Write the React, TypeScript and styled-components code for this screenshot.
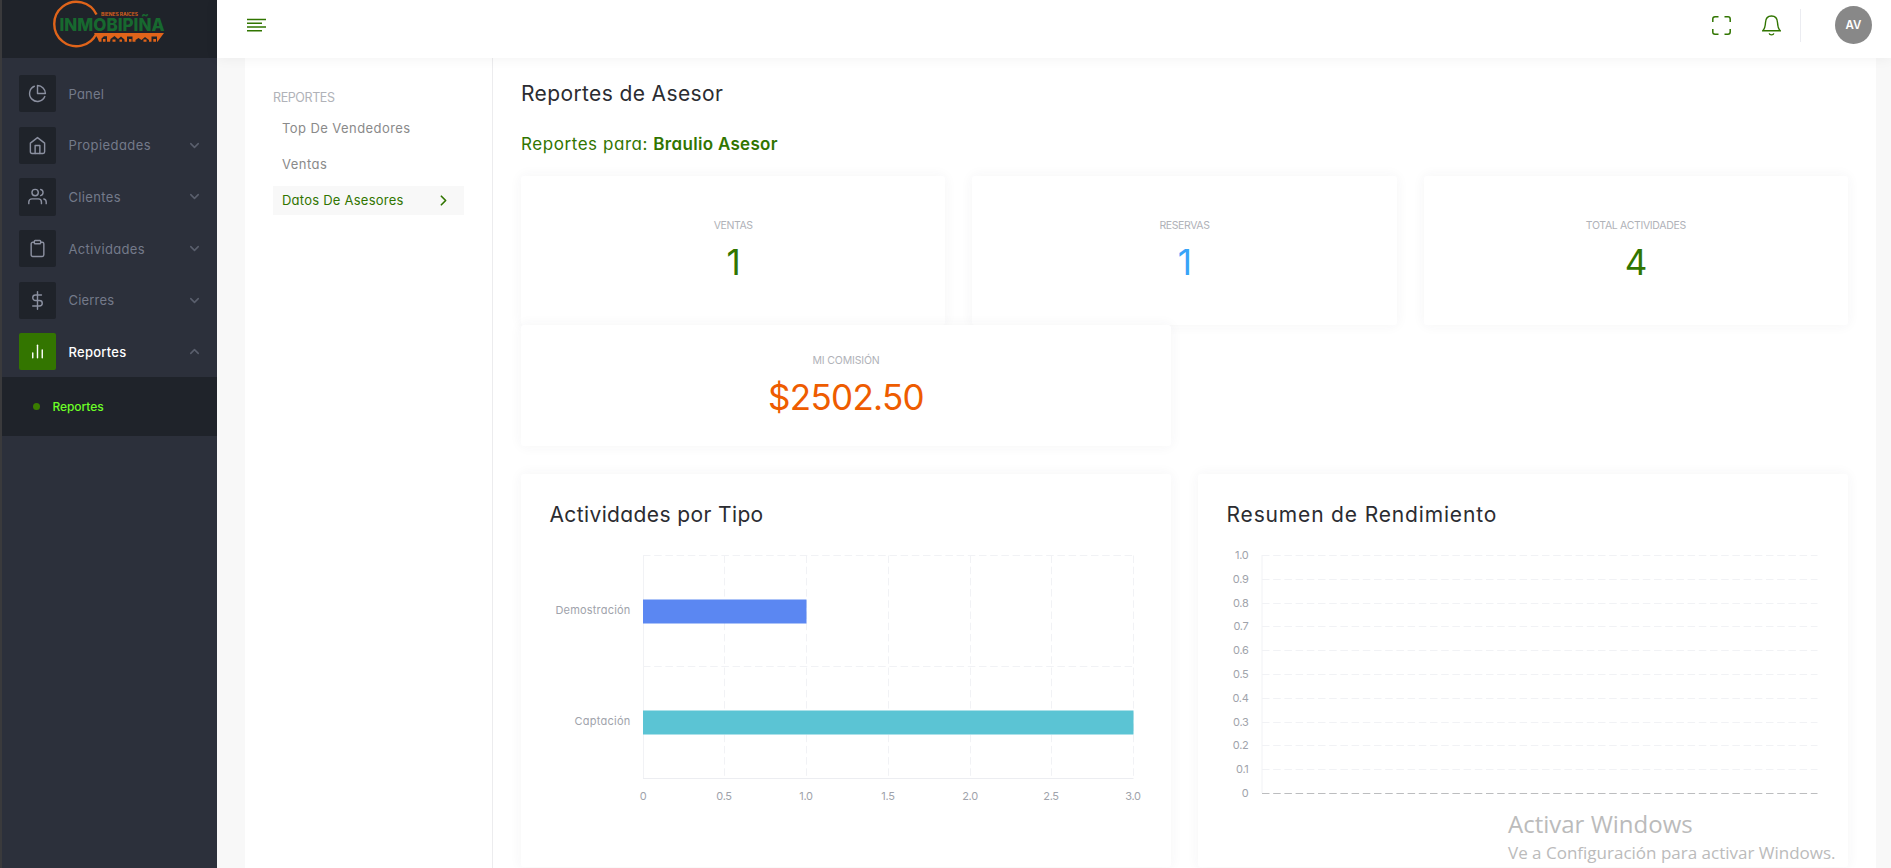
import React from 'react';
import styled, { createGlobalStyle } from 'styled-components';
import {
  FiBarChart2,
  FiChevronDown,
  FiChevronRight,
  FiChevronUp,
  FiClipboard,
  FiDollarSign,
  FiHome,
  FiPieChart,
  FiUsers,
} from 'react-icons/fi';
import type { IconType } from 'react-icons';

const color = {
  green: '#317500',
  lime: '#6cff26',
  blue: '#38a4f8',
  orange: '#ee5c00',
  ink: '#2b2c31',
  muted: '#b0b2b8',
  sidebar: '#2c303b',
  sidebarDark: '#1f232a',
  sidebarText: '#747a8a',
};

const GlobalStyle = createGlobalStyle`
  *, *::before, *::after { box-sizing: border-box; }
  body {
    margin: 0;
    background: #f8f8f8;
    font-family: Inter, "Open Sans", sans-serif;
    font-feature-settings: "cv11";
    overflow: hidden;
  }
  h1, h2, h3, p { margin: 0; font-weight: 400; }
`;

const Shell = styled.div`
  display: flex;
  width: 100%;
  height: 868px;
  overflow: hidden;
`;

/* Sidebar */

const Sidebar = styled.aside`
  width: 217px;
  flex: none;
  background: ${color.sidebar};
  border-left: 2px solid #3a3a3c;
`;

const Brand = styled.div`
  height: 58px;
  padding-left: 50px;
  background: ${color.sidebarDark};
  svg { display: block; }
`;

const Nav = styled.nav`
  display: flex;
  flex-direction: column;
  gap: 14.4px;
  padding: 17.2px 17px 6.7px;
`;

const NavRow = styled.div<{ $active?: boolean }>`
  display: flex;
  align-items: center;
  height: 37.2px;
  color: ${p => (p.$active ? '#fff' : color.sidebarText)};
`;

const NavIcon = styled.span<{ $active?: boolean }>`
  display: grid;
  place-items: center;
  width: 37px;
  height: 37.2px;
  border-radius: 2px;
  color: ${p => (p.$active ? '#fff' : '#8b90a0')};
  background: ${p => (p.$active ? '#337500' : color.sidebarDark)};
  svg { stroke-width: 1.8; }
`;

const NavLabel = styled.span<{ $track: number; $active?: boolean }>`
  flex: 1;
  margin-left: 12.5px;
  font-size: 13px;
  font-weight: ${p => (p.$active ? 500 : 400)};
  letter-spacing: ${p => p.$track}px;
`;

const NavArrow = styled.span`
  display: grid;
  margin-right: -1.5px;
  color: #5a5f6d;
  svg { stroke-width: 2.4; }
`;

const SubMenu = styled.div`
  display: flex;
  align-items: center;
  height: 59px;
  padding-left: 31px;
  background: ${color.sidebarDark};
  color: ${color.lime};
  font-size: 12px;
  font-weight: 500;
  letter-spacing: -0.08px;
`;

const Dot = styled.i`
  width: 7px;
  height: 7px;
  margin-right: 12.5px;
  border-radius: 50%;
  background: #3a7d00;
`;

/* Top bar */

const Main = styled.div`
  display: flex;
  flex: 1;
  min-width: 0;
  flex-direction: column;
`;

const TopBar = styled.header`
  position: relative;
  z-index: 1;
  display: flex;
  flex: none;
  justify-content: space-between;
  height: 58px;
  padding: 0 19px 0 30px;
  background: #fff;
  box-shadow: 0 0 13px rgba(30, 30, 40, 0.06);
  color: ${color.green};
`;

const MenuIcon = styled.svg`
  margin-top: 17px;
`;

const Tools = styled.div`
  display: flex;
  height: 50px;
  align-items: center;
`;

const BellIcon = styled.svg`
  margin-left: 31px;
`;

const Divider = styled.span`
  width: 1px;
  height: 33px;
  margin: 0 34px 0 19px;
  background: #ebecf1;
`;

const Avatar = styled.span`
  display: grid;
  place-items: center;
  width: 37px;
  height: 38px;
  padding-bottom: 1px;
  border-radius: 50%;
  background: #888;
  color: #fff;
  font-size: 11.5px;
  font-weight: 600;
`;

/* Page */

const Page = styled.main`
  display: flex;
  flex: 1;
  min-height: 0;
  margin: 0 15px 0 28px;
  background: #fff;
`;

const SideList = styled.section`
  width: 248px;
  flex: none;
  padding: 30px 28px 0;
  border-right: 1px solid #ececee;
`;

const SideTitle = styled.h3`
  height: 20px;
  line-height: 20px;
  margin-bottom: 5.5px;
  color: ${color.muted};
  font-size: 12.5px;
  letter-spacing: -0.4px;
`;

const SideItem = styled.div<{ $active?: boolean; $track: number }>`
  display: flex;
  align-items: center;
  justify-content: space-between;
  height: 29px;
  margin-bottom: 7.2px;
  padding: 0 12px 0 9px;
  background: ${p => (p.$active ? '#f8f8f8' : 'none')};
  color: ${p => (p.$active ? color.green : '#8a8a8a')};
  font-size: 13px;
  letter-spacing: ${p => p.$track}px;
`;

const Body = styled.section`
  flex: 1;
  min-width: 0;
  padding: 20.5px 28px 0;
`;

const Title = styled.h1`
  height: 30px;
  line-height: 30px;
  color: ${color.ink};
  font-size: 21px;
  letter-spacing: 0.38px;
`;

const Advisor = styled.h2`
  height: 28px;
  margin: 21px 0 18.5px;
  line-height: 28px;
  color: ${color.green};
  font-size: 17px;
  letter-spacing: 0.56px;
  strong { font-weight: 600; letter-spacing: 0.3px; }
`;

const Card = styled.div`
  position: relative;
  border-radius: 3px;
  background: #fff;
  box-shadow: 0 0 13px rgba(60, 60, 70, 0.055);
`;

const StatRow = styled.div`
  display: grid;
  grid-template-columns: repeat(3, 1fr);
  gap: 27px;
`;

const HalfRow = styled.div`
  display: grid;
  grid-template-columns: repeat(2, 1fr);
  gap: 27px;
  margin-bottom: 28px;
`;

const Stat = styled(Card)<{ $tall?: boolean }>`
  height: ${p => (p.$tall ? 149 : 121)}px;
  padding-top: ${p => (p.$tall ? 39.5 : 25.5)}px;
  text-align: center;
`;

const StatLabel = styled.p<{ $track: number }>`
  height: 20px;
  line-height: 20px;
  color: ${color.muted};
  font-size: 10.5px;
  letter-spacing: ${p => p.$track}px;
`;

const StatValue = styled.p<{ $color: string }>`
  height: 50px;
  margin-top: 1px;
  line-height: 50px;
  color: ${p => p.$color};
  font-size: 35px;
  letter-spacing: -0.7px;
`;

const ChartCard = styled(Card)`
  height: 393px;
  padding-top: 26px;
`;

const ChartTitle = styled.h3<{ $track: number }>`
  height: 30px;
  margin: 0 0 10px 28.5px;
  line-height: 30px;
  color: ${color.ink};
  font-size: 21px;
  letter-spacing: ${p => p.$track}px;
`;

const Plot = styled.svg`
  display: block;
  text { font-size: 11px; fill: #a0a3ab; }
`;

const Watermark = styled.div`
  position: absolute;
  z-index: 2;
  left: 1508px;
  top: 806px;
  color: #bbb;
  font-family: "Open Sans", sans-serif;
  white-space: nowrap;
  p { height: 35px; line-height: 35px; font-size: 24px; }
  small { display: block; height: 24px; line-height: 24px; font-size: 17px; }
`;

/* Drawings */

function Logo() {
  return (
    <svg width="116" height="50" viewBox="52 0 116 50">
      <path d="M96.5 14.5A22.2 22.2 0 1 0 96.5 33.5" fill="none" stroke="#e0641a" strokeWidth="2.400" />
      <path d="M94 33H164L157.500 41.700H99L97.500 38Z" fill="#e0641a" />
      <g fill={color.sidebarDark}>
        <path d="M101.500 42V38.500L104 36.300H107V42ZM110 42L110.500 39L114.500 36L118 39L121 36.500L124.500 39.500V42ZM127 42V36.500H132.500V42ZM135.500 42V40L138.500 38L141.500 40L145 37L149 40V42ZM151.500 42V36.500H157V42Z" />
      </g>
      <path
        d="M103 39H105.500V41.700H103ZM112.500 39.500H115.500V41.700H112.500ZM119.500 39.500H122V41.700H119.500ZM129 39H131.500V41.700H129ZM143.500 39.500H146.500V41.700H143.500ZM153.300 39H156V41.700H153.300Z"
        fill="#e0641a"
      />
      <text x="101" y="16" fontSize="4.300" fontWeight="700" fill="#d65f1c" textLength="37" lengthAdjust="spacingAndGlyphs">
        BIENES RAICES
      </text>
      <text x="59.500" y="31" fontSize="17.500" fontWeight="800" fill="#17692f" textLength="105" lengthAdjust="spacingAndGlyphs">
        INMOBIPIÑA
      </text>
    </svg>
  );
}

const DASH = '7.5 3.7';
const GRID = '#f1f2f5';

function ActivityChart() {
  const left = 122;
  const unit = 163.5;
  const top = 15.5;
  const bottom = 238.5;
  const ticks = [0, 0.5, 1, 1.5, 2, 2.5, 3];
  const bars = [
    { name: 'Demostración', value: 1, y: 59.5, fill: '#5b87f2', track: 0.19 },
    { name: 'Captación', value: 3, y: 170.5, fill: '#5bc4d4', track: 0.25 },
  ];
  return (
    <Plot width="650" height="320">
      {[top, 126.5].map(y => (
        <line key={y} x1={left} x2={left + 3 * unit} y1={y} y2={y} stroke={GRID} strokeDasharray={DASH} />
      ))}
      {ticks.map(t => {
        const x = Math.floor(left + t * unit) + 0.5;
        return (
          <React.Fragment key={t}>
            <line x1={x} x2={x} y1={top} y2={bottom} stroke={GRID} strokeDasharray={t ? DASH : undefined} />
            <text x={x - 0.5} y="260" textAnchor="middle" letterSpacing="-0.3">
              {t === 0 ? '0' : t.toFixed(1)}
            </text>
          </React.Fragment>
        );
      })}
      <line x1={left} x2={left + 3 * unit} y1={bottom} y2={bottom} stroke="#ecedf1" />
      {bars.map(b => (
        <React.Fragment key={b.name}>
          <rect x={left} y={b.y} width={b.value * unit} height="24" fill={b.fill} />
          <text x="109.500" y={b.y + 14.9} textAnchor="end" letterSpacing={b.track}>
            {b.name}
          </text>
        </React.Fragment>
      ))}
    </Plot>
  );
}

function PerformanceChart() {
  const left = 64;
  const right = 619.5;
  const rows = Array.from({ length: 11 }, (_, i) => i);
  return (
    <Plot width="650" height="320">
      <line x1={left} x2={left} y1="15" y2="253" stroke={GRID} />
      {rows.map(i => {
        const y = Math.floor(15.5 + i * 23.8) + 0.5;
        const last = i === 10;
        return (
          <React.Fragment key={i}>
            <line x1={left} x2={right} y1={y} y2={y} stroke={last ? '#bcbdbf' : GRID} strokeDasharray={DASH} />
            <text x="50.500" y={y + 3.8} textAnchor="end" letterSpacing="-0.3">
              {last ? '0' : (1 - i / 10).toFixed(1)}
            </text>
          </React.Fragment>
        );
      })}
    </Plot>
  );
}

const navItems: { label: string; icon: IconType; track: number; arrow?: boolean; active?: boolean }[] = [
  { label: 'Panel', icon: FiPieChart, track: 0.2 },
  { label: 'Propiedades', icon: FiHome, track: 0.43, arrow: true },
  { label: 'Clientes', icon: FiUsers, track: 0.36, arrow: true },
  { label: 'Actividades', icon: FiClipboard, track: 0.36, arrow: true },
  { label: 'Cierres', icon: FiDollarSign, track: 0.2, arrow: true },
  { label: 'Reportes', icon: FiBarChart2, track: 0.25, arrow: true, active: true },
];

export default function App() {
  return (
    <>
      <GlobalStyle />
      <Shell>
        <Sidebar>
          <Brand>
            <Logo />
          </Brand>
          <Nav>
            {navItems.map(({ label, icon: Icon, track, arrow, active }) => (
              <NavRow key={label} $active={active}>
                <NavIcon $active={active}>
                  <Icon size={19} />
                </NavIcon>
                <NavLabel $track={track} $active={active}>
                  {label}
                </NavLabel>
                {arrow && <NavArrow>{active ? <FiChevronUp size={15} /> : <FiChevronDown size={15} />}</NavArrow>}
              </NavRow>
            ))}
          </Nav>
          <SubMenu>
            <Dot />
            Reportes
          </SubMenu>
        </Sidebar>

        <Main>
          <TopBar>
            <MenuIcon width="19" height="16" fill="none" stroke="currentColor" strokeWidth="1.500">
              <path d="M0 2.500H19M0 6.300H15M0 10H19M0 13.800H15" />
            </MenuIcon>
            <Tools>
              <svg width="19" height="19" fill="none" stroke="currentColor" strokeWidth="1.500">
                <path d="M.8 6V3Q.8.800 3 .8H6.500M12.500.800H16Q18.200.800 18.200 3V6M18.200 13V16Q18.200 18.200 16 18.200H12.500M6.500 18.200H3Q.8 18.200.800 16V13" />
              </svg>
              <BellIcon width="19" height="21" fill="none" stroke="currentColor" strokeWidth="1.400">
                <path d="M.7 15.700C2.700 14 3.300 11.500 3.500 7.500C3.700 3.400 6 1 9.500 1S15.300 3.400 15.500 7.500C15.700 11.500 16.300 14 18.300 15.700ZM7.200 18.300C7.600 20.400 11.400 20.400 11.800 18.300" />
              </BellIcon>
              <Divider />
              <Avatar>AV</Avatar>
            </Tools>
          </TopBar>

          <Page>
            <SideList>
              <SideTitle>REPORTES</SideTitle>
              <SideItem $track={0.42}>Top De Vendedores</SideItem>
              <SideItem $track={0.45}>Ventas</SideItem>
              <SideItem $track={0.24} $active>
                Datos De Asesores
                <FiChevronRight size={17} strokeWidth={2.4} />
              </SideItem>
            </SideList>

            <Body>
              <Title>Reportes de Asesor</Title>
              <Advisor>
                Reportes para: <strong>Braulio Asesor</strong>
              </Advisor>
              <StatRow>
                <Stat $tall>
                  <StatLabel $track={-0.39}>VENTAS</StatLabel>
                  <StatValue $color={color.green}>1</StatValue>
                </Stat>
                <Stat $tall>
                  <StatLabel $track={-0.4}>RESERVAS</StatLabel>
                  <StatValue $color={color.blue}>1</StatValue>
                </Stat>
                <Stat $tall>
                  <StatLabel $track={-0.32}>TOTAL ACTIVIDADES</StatLabel>
                  <StatValue $color={color.green}>4</StatValue>
                </Stat>
              </StatRow>
              <HalfRow>
                <Stat>
                  <StatLabel $track={-0.16}>MI COMISIÓN</StatLabel>
                  <StatValue $color={color.orange}>$2502.50</StatValue>
                </Stat>
              </HalfRow>
              <HalfRow>
                <ChartCard>
                  <ChartTitle $track={0.38}>Actividades por Tipo</ChartTitle>
                  <ActivityChart />
                </ChartCard>
                <ChartCard>
                  <ChartTitle $track={0.84}>Resumen de Rendimiento</ChartTitle>
                  <PerformanceChart />
                </ChartCard>
              </HalfRow>
            </Body>
          </Page>
        </Main>
      </Shell>
      <Watermark>
        <p>Activar Windows</p>
        <small>Ve a Configuración para activar Windows.</small>
      </Watermark>
    </>
  );
}
